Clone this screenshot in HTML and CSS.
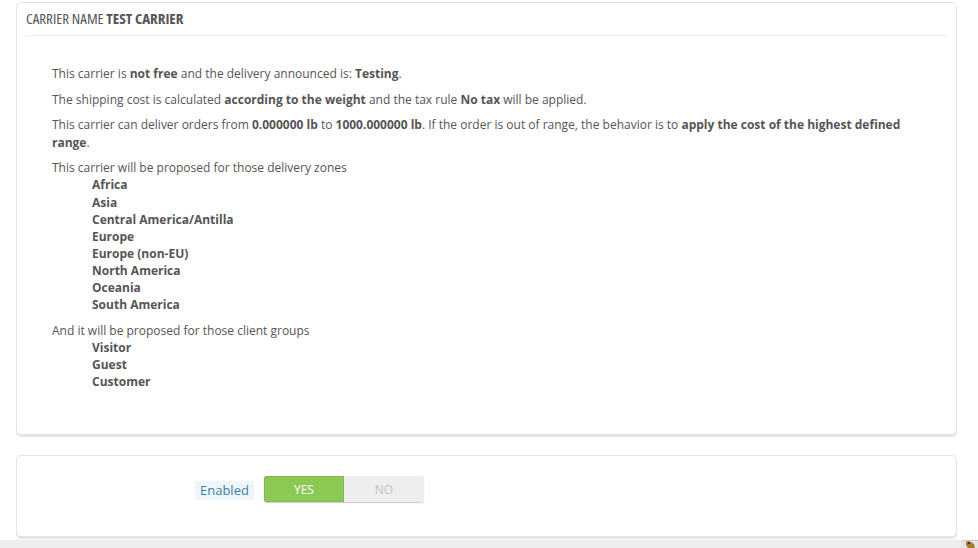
FILE: index.html
```html
<!DOCTYPE html>
<html lang="en">
<head>
<meta charset="utf-8">
<title>Carrier summary</title>
<link rel="stylesheet" href="styles.css">
</head>
<body>
<main class="content">
  <section class="panel summary">
    <h3 class="panel-heading">Carrier name <b>Test Carrier</b></h3>
    <div class="summary-body">
      <p>This carrier is <b>not free</b> and the delivery announced is: <b>Testing</b>.</p>
      <p>The shipping cost is calculated <b>according to the weight</b> and the tax rule <b>No tax</b> will be applied.</p>
      <p>This carrier can deliver orders from <b>0.000000 lb</b> to <b>1000.000000 lb</b>. If the order is out of range, the behavior is to <b>apply the cost of the highest defined range</b>.</p>
      <div class="group">
        This carrier will be proposed for those delivery zones
        <ul>
          <li>Africa</li>
          <li>Asia</li>
          <li>Central America/Antilla</li>
          <li>Europe</li>
          <li>Europe (non-EU)</li>
          <li>North America</li>
          <li>Oceania</li>
          <li>South America</li>
        </ul>
      </div>
      <div class="group">
        And it will be proposed for those client groups
        <ul>
          <li>Visitor</li>
          <li>Guest</li>
          <li>Customer</li>
        </ul>
      </div>
    </div>
  </section>
  <section class="panel status">
    <span class="field-label">Enabled</span>
    <div class="switch">
      <span class="switch-yes">YES</span>
      <span class="switch-no">NO</span>
    </div>
  </section>
</main>
<footer class="bottom-bar">
  <span class="debug-tab">
    <svg width="10" height="7" viewBox="0 0 10 7"><path d="M1 1l2-1 3 1 3 2 1 4H3L1 4z" fill="#a67c2c"/><path d="M3 1h2v2H3z" fill="#4a3414"/></svg>
  </span>
</footer>
</body>
</html>
```
FILE: styles.css
```css
html, body {
  margin: 0;
  padding: 0;
  height: 548px;
  overflow: hidden;
  background: #fff;
}
body {
  display: flex;
  flex-direction: column;
  font-family: "Open Sans", sans-serif;
  font-size: 12px;
  line-height: 17.14px;
  color: #555;
}
.content {
  flex: 1;
  display: flex;
  flex-direction: column;
  gap: 20px;
  padding: 2px 21px 0 16px;
}
.panel {
  box-sizing: border-box;
  background: #fff;
  border: 1px solid #e3e3e3;
  border-radius: 5px;
  box-shadow: 0 2px 0 #e6e6e6;
}
.summary {
  height: 433px;
  padding: 0 9px;
}
.panel-heading {
  margin: 0;
  height: 32px;
  border-bottom: 1px solid #eee;
  font-family: "Open Sans", sans-serif;
  font-stretch: 83%;
  font-size: 15px;
  font-weight: 400;
  line-height: 31px;
  text-transform: uppercase;
  color: #555;
}
.panel-heading b { font-weight: 700; }
.summary-body { padding: 29.2px 40px 0 26px; }
.summary-body p { margin: 0 0 8.5px; }
.group { margin-bottom: 8.5px; }
.group ul {
  margin: 0;
  padding: 0 0 0 40px;
  list-style: none;
  font-weight: 700;
}
.status {
  height: 82px;
  padding: 20px 0 0 178px;
  display: flex;
  align-items: flex-start;
  gap: 10px;
}
.field-label {
  margin-top: 5px;
  padding: 0 5px;
  height: 19px;
  line-height: 19px;
  font-size: 13px;
  color: #3d7fa5;
  background: #eef6fb;
  border-radius: 3px;
}
.switch {
  display: flex;
  width: 160px;
  height: 26px;
  line-height: 27px;
  text-align: center;
  border-radius: 3px;
  box-shadow: 0 1px 1px #ccc;
}
.switch-yes, .switch-no { flex: 0 0 50%; }
.switch-yes {
  background: #8bc954;
  color: #fff;
  border-radius: 3px 0 0 3px;
  box-shadow: inset 0 0 0 1px #80bb4b;
}
.switch-no {
  background: #eee;
  color: #c0c0c0;
  border-radius: 0 3px 3px 0;
}
.bottom-bar {
  height: 8px;
  background: #eee;
  position: relative;
}
.debug-tab {
  position: absolute;
  right: 0;
  bottom: 0;
  width: 17px;
  height: 7px;
  box-sizing: border-box;
  background: #e4e4e4;
  border-radius: 3px 0 0 0;
  box-shadow: 0 -1px 0 #c8c8c8;
  display: flex;
  justify-content: center;
  overflow: hidden;
}
```
